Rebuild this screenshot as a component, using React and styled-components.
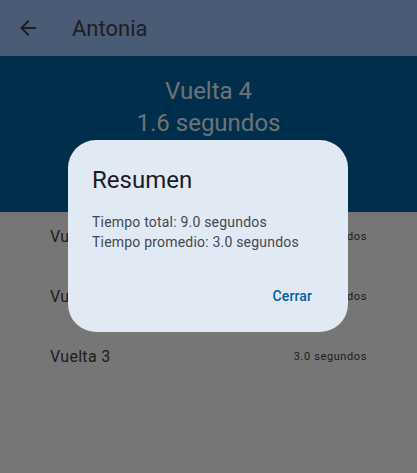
import React from "react";
import styled, { createGlobalStyle } from "styled-components";

const Global = createGlobalStyle`
  html, body { margin: 0; padding: 0; }
  body {
    font-family: Roboto, "Noto Sans", sans-serif;
    background: #ececec;
  }
`;

const Page = styled.div`
  width: 417px;
  height: 473px;
  display: flex;
  flex-direction: column;
  background: #ececec;
  overflow: hidden;
`;

const AppBar = styled.header`
  height: 56px;
  display: flex;
  align-items: center;
  background: #94b7ec;
  color: #3a3d42;
  padding: 0 16px;
  gap: 32px;
`;

const BackIcon = styled.svg`
  width: 24px;
  height: 24px;
  fill: currentColor;
`;

const Title = styled.h1`
  margin: 0;
  font-size: 22px;
  font-weight: 400;
`;

const Header = styled.section`
  height: 156px;
  box-sizing: border-box;
  padding-top: 19px;
  background: #005c9a;
  color: #dee2ea;
  text-align: center;
  font-size: 24px;
  line-height: 32px;
`;

const List = styled.ul`
  list-style: none;
  margin: 0;
  padding: 0 50px;
  display: flex;
  flex-direction: column;
  gap: 12px;
`;

const Row = styled.li`
  height: 48px;
  display: flex;
  align-items: center;
  justify-content: space-between;
  color: #3c3c3e;
`;

const RowTitle = styled.span`
  font-size: 16px;
  letter-spacing: 0.3px;
`;

const RowTime = styled.span`
  font-size: 11px;
  letter-spacing: 0.6px;
`;

const Scrim = styled.div`
  position: fixed;
  inset: 0;
  background: rgba(0, 0, 0, 0.5);
`;

const Dialog = styled.div`
  position: absolute;
  left: 68px;
  top: 140px;
  width: 280px;
  height: 192px;
  box-sizing: border-box;
  border-radius: 28px;
  background: #e1e9f5;
  padding: 24px 24px 16px;
  display: flex;
  flex-direction: column;
`;

const DialogTitle = styled.h2`
  margin: 0 0 16px;
  font-size: 24px;
  line-height: 32px;
  font-weight: 400;
  color: #1b1c1f;
`;

const DialogBody = styled.p`
  margin: 0;
  font-size: 14px;
  line-height: 20px;
  letter-spacing: 0.2px;
  color: #43474e;
`;

const Actions = styled.div`
  margin-top: auto;
  display: flex;
  justify-content: flex-end;
`;

const TextButton = styled.button`
  height: 40px;
  padding: 0 12px;
  border: none;
  background: none;
  font-family: Roboto, sans-serif;
  font-size: 14px;
  font-weight: 500;
  letter-spacing: 0.1px;
  color: #0061a4;
  border-radius: 20px;
`;

const laps = [
  { name: "Vuelta 1", time: "3.0 segundos" },
  { name: "Vuelta 2", time: "3.0 segundos" },
  { name: "Vuelta 3", time: "3.0 segundos" },
];

export default function App() {
  return (
    <>
      <Global />
      <Page>
        <AppBar>
          <BackIcon viewBox="0 0 24 24">
            <path d="M20 11H7.83l5.59-5.59L12 4l-8 8 8 8 1.41-1.41L7.83 13H20v-2z" />
          </BackIcon>
          <Title>Antonia</Title>
        </AppBar>
        <Header>
          <div>Vuelta 4</div>
          <div>1.6 segundos</div>
        </Header>
        <List>
          {laps.map((lap) => (
            <Row key={lap.name}>
              <RowTitle>{lap.name}</RowTitle>
              <RowTime>{lap.time}</RowTime>
            </Row>
          ))}
        </List>
      </Page>
      <Scrim>
        <Dialog>
          <DialogTitle>Resumen</DialogTitle>
          <DialogBody>
            Tiempo total: 9.0 segundos
            <br />
            Tiempo promedio: 3.0 segundos
          </DialogBody>
          <Actions>
            <TextButton>Cerrar</TextButton>
          </Actions>
        </Dialog>
      </Scrim>
    </>
  );
}
